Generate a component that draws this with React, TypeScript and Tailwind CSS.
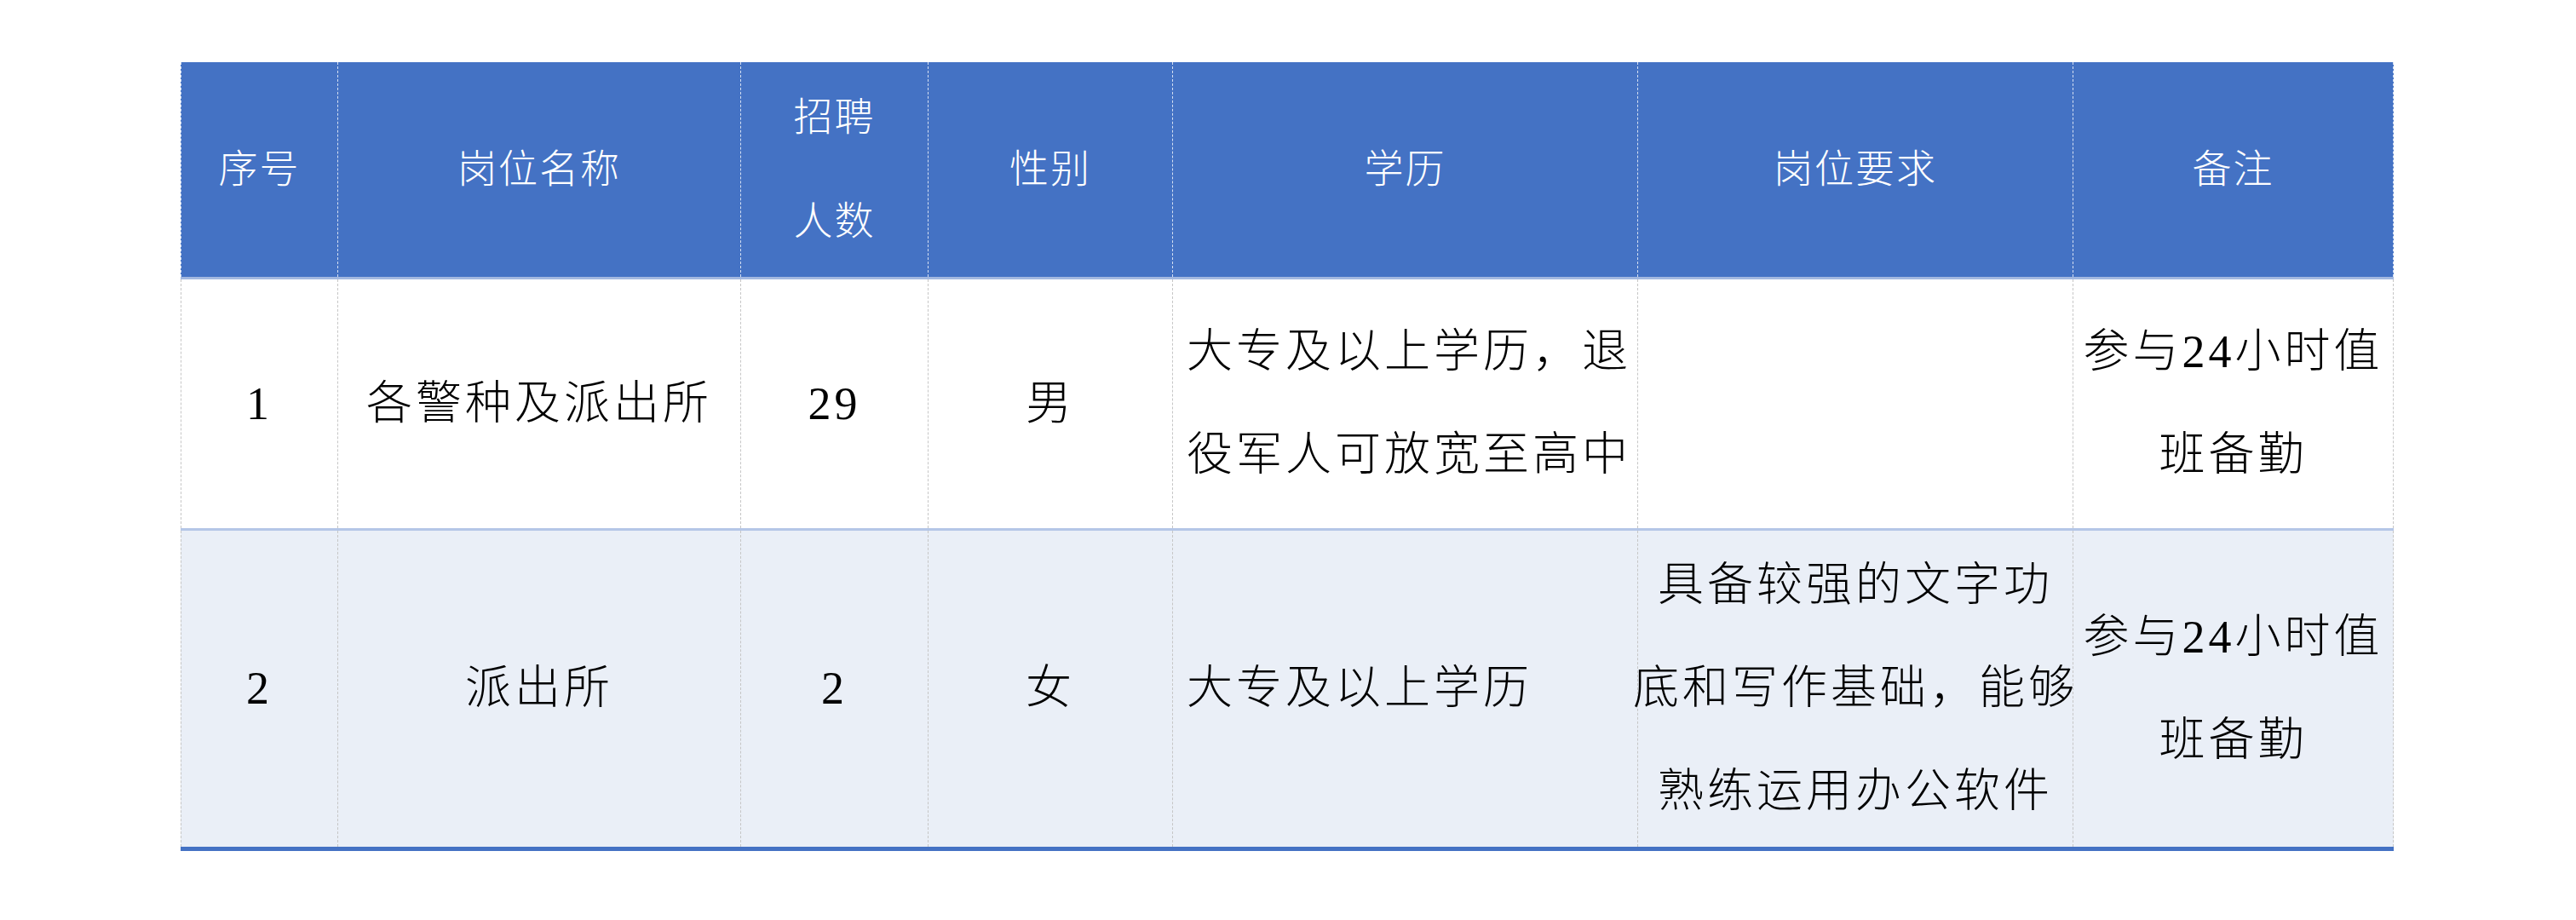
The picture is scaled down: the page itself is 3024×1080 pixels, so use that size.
import React from "react"

type Cell = { lines: string[]; left?: boolean }

const grid = "grid grid-cols-[185px_473px_220px_287px_546px_511px_376px]"

const header: Cell[] = [
  { lines: ["序号"] },
  { lines: ["岗位名称"] },
  { lines: ["招聘", "人数"] },
  { lines: ["性别"] },
  { lines: ["学历"] },
  { lines: ["岗位要求"] },
  { lines: ["备注"] },
]

const rows: Cell[][] = [
  [
    { lines: ["1"] },
    { lines: ["各警种及派出所"] },
    { lines: ["29"] },
    { lines: ["男"] },
    { lines: ["大专及以上学历，退", "役军人可放宽至高中"], left: true },
    { lines: [] },
    { lines: ["参与24小时值", "班备勤"] },
  ],
  [
    { lines: ["2"] },
    { lines: ["派出所"] },
    { lines: ["2"] },
    { lines: ["女"] },
    { lines: ["大专及以上学历"], left: true },
    { lines: ["具备较强的文字功", "底和写作基础，能够", "熟练运用办公软件"] },
    { lines: ["参与24小时值", "班备勤"] },
  ],
]

function BodyCell({ cell, first }: { cell: Cell; first: boolean }) {
  return (
    <div
      className={`flex flex-col justify-center border-r border-dashed border-[#c6c6c6] ${first ? "border-l" : ""} ${
        cell.left ? "items-start pl-[16px]" : "items-center"
      }`}
    >
      {cell.lines.map((line) => (
        <div key={line} className="whitespace-nowrap leading-[121px]">
          {line}
        </div>
      ))}
    </div>
  )
}

export default function App() {
  return (
    <div className="min-h-screen bg-white pl-[212px] pt-[73px] font-['Liberation_Serif','Noto_Sans_CJK_SC',serif]">
      <div className="w-[2598px]">
        <div className={`${grid} h-[255px] border-b-[3px] border-[#a3b8e0] bg-[#4472c4] text-[46px] font-light tracking-[2px] text-white`}>
          {header.map((cell, i) => (
            <div
              key={i}
              className={`flex flex-col items-center justify-center border-r border-dashed border-[#d6e0f2] ${i === 0 ? "border-l" : ""}`}
            >
              {cell.lines.map((line) => (
                <div key={line} className="whitespace-nowrap leading-[122px]">
                  {line}
                </div>
              ))}
            </div>
          ))}
        </div>

        <div className={`${grid} h-[295px] border-b-[3px] border-[#b4c6e7] bg-white text-[54px] font-light tracking-[4px] text-black`}>
          {rows[0].map((cell, i) => (
            <BodyCell key={i} cell={cell} first={i === 0} />
          ))}
        </div>

        <div className={`${grid} h-[376px] border-b-[5px] border-[#4472c4] bg-[#eaeff7] text-[54px] font-light tracking-[4px] text-black`}>
          {rows[1].map((cell, i) => (
            <BodyCell key={i} cell={cell} first={i === 0} />
          ))}
        </div>
      </div>
    </div>
  )
}
